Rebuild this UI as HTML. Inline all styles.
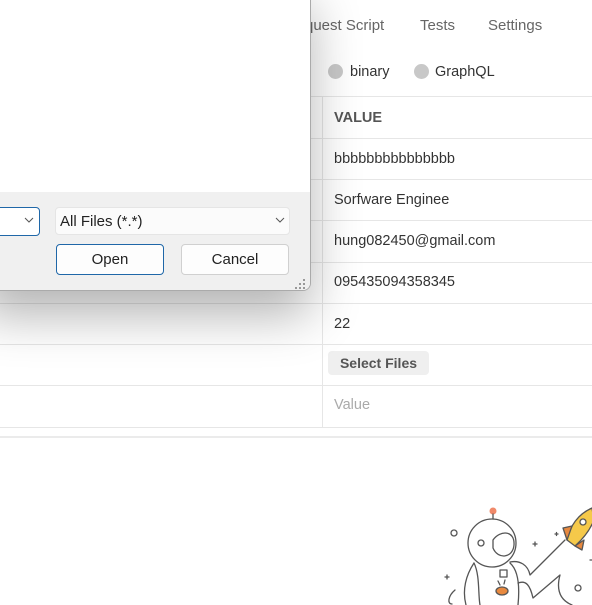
<!DOCTYPE html>
<html><head><meta charset="utf-8"><style>
*{margin:0;padding:0;box-sizing:border-box}
body{width:592px;height:605px;overflow:hidden;background:#fff;font-family:"Liberation Sans",sans-serif;position:relative;color:#333}
.abs{position:absolute}
.tab{top:17px;font-size:15px;color:#666}
.hl{position:absolute;left:0;width:592px;height:1px;background:#e6e6e6}
.cell{position:absolute;left:334px;font-size:14.5px;color:#333}
</style></head><body>
<div class="abs tab" style="left:305px">quest Script</div>
<div class="abs tab" style="left:420px">Tests</div>
<div class="abs tab" style="left:488px">Settings</div>
<div class="abs" style="left:328px;top:64px;width:15px;height:15px;border-radius:50%;background:#c8c8c8"></div>
<div class="abs" style="left:350px;top:64px;font-size:14.5px">binary</div>
<div class="abs" style="left:414px;top:64px;width:15px;height:15px;border-radius:50%;background:#c8c8c8"></div>
<div class="abs" style="left:435px;top:64px;font-size:14.5px">GraphQL</div>

<div class="hl" style="top:96px"></div>
<div class="hl" style="top:138px"></div>
<div class="hl" style="top:179px"></div>
<div class="hl" style="top:220px"></div>
<div class="hl" style="top:262px"></div>
<div class="hl" style="top:303px"></div>
<div class="hl" style="top:344px"></div>
<div class="hl" style="top:385px"></div>
<div class="hl" style="top:427px"></div>
<div class="abs" style="left:0;top:436px;width:592px;height:2px;background:#ebebeb"></div>
<div class="abs" style="left:322px;top:96px;width:1px;height:331px;background:#e6e6e6"></div>

<div class="cell" style="top:110px;font-weight:bold;color:#555">VALUE</div>
<div class="cell" style="top:151px">bbbbbbbbbbbbbbb</div>
<div class="cell" style="top:192px">Sorfware Enginee</div>
<div class="cell" style="top:233px">hung082450@gmail.com</div>
<div class="cell" style="top:274px">095435094358345</div>
<div class="cell" style="top:316px">22</div>
<div class="abs" style="left:328px;top:351px;width:101px;height:24px;background:#efefef;border-radius:4px;font-size:14px;font-weight:bold;color:#555;text-align:center;line-height:24px">Select Files</div>
<div class="cell" style="top:397px;color:#aaa">Value</div>

<!-- shadow -->
<div class="abs" style="left:-20px;top:-20px;width:330px;height:311px;box-shadow:0 24px 50px rgba(0,0,0,0.3);border-radius:8px"></div>
<!-- dialog -->
<div class="abs" style="left:-20px;top:-20px;width:331px;height:311px;background:#fff;border:1px solid #aaa;border-radius:8px;overflow:hidden">
  <div class="abs" style="left:0;top:211px;width:331px;height:100px;background:#f0f0f0"></div>
</div>
<div class="abs" style="left:-10px;top:207px;width:50px;height:29px;background:#fff;border:1px solid #1f67a8;border-radius:4px"></div>
<svg class="abs" style="left:24px;top:217px" width="10" height="6"><path d="M1 1l4 4 4-4" stroke="#555" fill="none"/></svg>
<div class="abs" style="left:55px;top:207px;width:235px;height:28px;background:#fbfbfb;border:1px solid #e5e5e5;border-radius:4px;font-size:15px;color:#222;padding-left:4px;line-height:27px">All Files (*.*)</div>
<svg class="abs" style="left:275px;top:217px" width="10" height="6"><path d="M1 1l4 4 4-4" stroke="#555" fill="none"/></svg>
<div class="abs" style="left:56px;top:244px;width:108px;height:31px;background:#fdfdfd;border:1.5px solid #1f67a8;border-radius:4px;font-size:15px;color:#222;text-align:center;line-height:29px">Open</div>
<div class="abs" style="left:181px;top:244px;width:108px;height:31px;background:#fdfdfd;border:1px solid #d0d0d0;border-radius:4px;font-size:15px;color:#222;text-align:center;line-height:29px">Cancel</div>
<svg class="abs" style="left:295px;top:279px" width="12" height="12"><g fill="#999"><rect x="8" y="0" width="2" height="2"/><rect x="4" y="4" width="2" height="2"/><rect x="8" y="4" width="2" height="2"/><rect x="0" y="8" width="2" height="2"/><rect x="4" y="8" width="2" height="2"/><rect x="8" y="8" width="2" height="2"/></g></svg>

<!-- astronaut -->
<svg class="abs" style="left:430px;top:500px" width="162" height="105" viewBox="430 500 162 105" fill="none" stroke="#555" stroke-width="1.3" stroke-linecap="round" stroke-linejoin="round">
  <circle cx="493" cy="511" r="3.5" fill="#f0896a" stroke="none"/>
  <line x1="493" y1="514" x2="493" y2="519"/>
  <circle cx="492" cy="543" r="24"/>
  <path d="M493 540 C500 530 515 530 514 545 C513 558 498 560 493 548 Z"/>
  <circle cx="481" cy="543" r="3"/>
  <path d="M474 563 C466 575 462 590 466 605"/>
  <path d="M510 563 C518 570 520 585 518 605"/>
  <path d="M474 563 C480 575 478 595 480 605"/>
  <path d="M510 562 C520 560 528 565 530 575 L565 540"/>
  <path d="M518 583 C526 580 530 585 533 598 L560 575 C556 590 560 600 572 605"/>
  <rect x="500" y="570" width="7" height="7"/>
  <ellipse cx="502" cy="591" rx="6" ry="4" fill="#e8893f" stroke="#555"/>
  <path d="M500 585 l-2 -4 M504 584 l1 -4"/>
  <path d="M455 590 C448 596 447 604 452 604"/>
  <circle cx="454" cy="533" r="3"/>
  <circle cx="578" cy="588" r="3"/>
  <path d="M445 577h4M447 575v4M533 544h4M535 542v4M555 534h3M556.5 532.5v3M590 560h2"/>
  <path d="M567 540 C570 526 578 514 592 508 L594 520 C590 530 584 538 575 546 Z" fill="#f5c94a" stroke="#555"/>
  <path d="M567 540 L563 528 L572 526 Z M575 546 L584 540 L582 550 Z" fill="#e8893f" stroke="#555"/>
  <circle cx="583" cy="522" r="3" fill="#fff"/>
</svg>
</body></html>
